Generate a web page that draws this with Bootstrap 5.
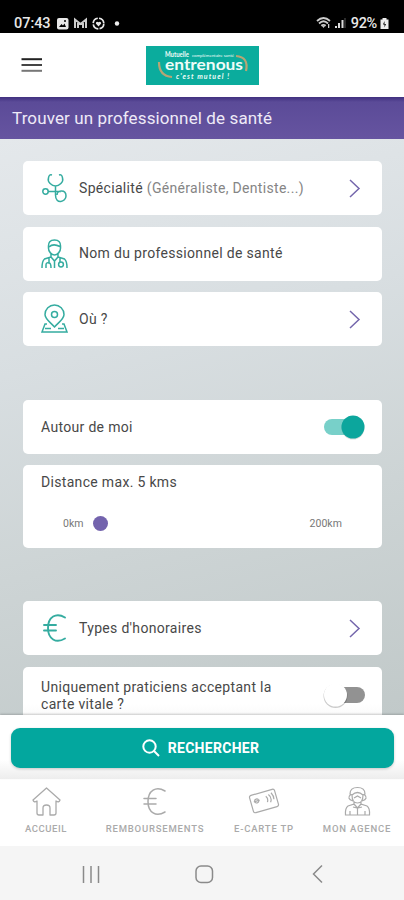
<!DOCTYPE html>
<html lang="fr">
<head>
<meta charset="utf-8">
<meta name="viewport" content="width=device-width, initial-scale=1">
<title>Trouver un professionnel de santé</title>
<link href="https://cdn.jsdelivr.net/npm/bootstrap@5.3.0/dist/css/bootstrap.min.css" rel="stylesheet">
<style>
body{font-family:Roboto,"Liberation Sans",sans-serif;color:#484848;font-size:14px;line-height:17px;background:#fff}
svg{display:block;flex:none;overflow:visible}
.phone{width:404px;height:900px}
.status{height:33px;background:#000;color:#e8e8e8;font-size:14.5px;font-weight:500;padding:15px 15px 0 14px}
.topbar{height:64px;padding:0 21px}
.title-strip{height:42px;background:linear-gradient(#40307f,#5b4b98 5px,#6654a0);color:#eeeaf7;font-size:17px;padding-left:12px;letter-spacing:.12px}
.content{height:576px;padding:22px 22px 0 23px;background:linear-gradient(165deg,#e4e8eb 0%,#d8dee1 35%,#cdd4d5 65%,#c1c9c9 100%)}
.tile{background:#fff;border-radius:5px;height:54px;margin-bottom:11.5px;padding:0 18px;letter-spacing:.32px;flex:none}
.tile-label{padding-left:11px}
.gap-top{margin-top:42.5px;margin-bottom:10.5px}
.hint{color:#858585}
.distance{height:83px;padding-top:9px;margin-bottom:0}
.scale-row{font-size:10.5px;letter-spacing:.05px;color:#777;padding:24px 22px 0 22px}
.dot{width:15px;height:15px;border-radius:50%;background:#7363ad;margin-left:9px}
.toggle{width:40px;height:24px}
.last{height:62px;padding-top:12px;background:linear-gradient(#fff 60%,#f4f4f4)}
.search{height:64px;background:linear-gradient(#fff 70%,#ededed);padding:13px 10px 0 11px;box-shadow:0 -1px 2px #0003;z-index:1}
.search .btn{height:40px;background:#03a79e;color:#fff;border:0;border-radius:9px;font-size:14px;font-weight:700;letter-spacing:.3px;box-shadow:0 1px 3px #0003;padding:0 4px 0 0}
.tabs{height:67px;background:#fff;color:#aaa;font-size:9.5px;font-weight:500;line-height:12px;letter-spacing:.8px}
.tabs>div{padding-top:7px}
.tabs span{margin-top:6px;white-space:nowrap}
.sysnav{height:54px;background:#f5f5f5}
</style>
<script src="https://cdn.jsdelivr.net/npm/bootstrap@5.3.0/dist/js/bootstrap.bundle.min.js"></script>
</head>
<body>
<svg width="0" height="0" class="position-absolute"><defs>
<g id="chev" fill="none" stroke="#7466ac" stroke-width="1.5"><path d="M1 1 10 9.500 1 18"/></g>
<g id="euro" fill="none" stroke-linecap="round"><path d="M22 3.500C13 -2 5 3 5 14S13 30 22 24.500M1 11H13M1 16.500H13"/></g>
</defs></svg>
<div class="phone d-flex flex-column overflow-hidden">
  <div class="status d-flex align-items-start">
    <span style="letter-spacing:-.05px">07:43</span>
    <svg width="66" height="14" viewBox="0 0 66 14" class="ms-1" style="margin-top:3px"><rect x="2" y="0" width="11.500" height="11.500" rx="2" fill="#e8e8e8"/><path d="M4 9 6.500 6 8 7.500 9.500 5.500 11 9z" fill="#000"/><circle cx="10" cy="3" r="1" fill="#000"/><path d="M20 10V1.500L25.500 6 31 1.500V10M23 10V5M28 10V5" fill="none" stroke="#ccc" stroke-width="2"/><circle cx="43.500" cy="5.500" r="5.300" fill="none" stroke="#e8e8e8" stroke-width="1.700" stroke-dasharray="7 1.300"/><path d="M43.500 8.500 40.800 5.500Q41 3 43.500 4.200 46 3 46.200 5.500z" fill="#e8e8e8"/><circle cx="62" cy="5.500" r="2.200" fill="#eee"/></svg>
    <svg width="33" height="14" viewBox="0 0 33 14" class="ms-auto me-1" style="margin-top:2px"><g fill="none" stroke="#ccc" stroke-width="1.800"><path d="M3 4Q9.500-2 16 4M5 6.500Q9.500 2 14 6.500M7.300 8.800Q9.500 7 11.700 8.800"/></g><path d="M9.500 11 8 9H11zM14 7h1.300v4H14z" fill="#ccc"/><path d="M21 9h2v2h-2zM24 6h2v5h-2zM27.500 3h2v8h-2z" fill="#ddd"/><path d="M30.500 1h1v10h-1z" fill="#555"/></svg>
    <span style="letter-spacing:-.3px">92%</span>
    <svg width="9" height="12" viewBox="0 0 9 12" style="margin:3px 0 0 3px"><path d="M2.500 0h4v1.500H8.500V11H.5V1.500h2z" fill="#eee"/><path d="M4.500 3 3 6.500h1.500v3L6 6H4.500z" fill="#000"/></svg>
  </div>
  <header class="topbar d-flex align-items-center">
    <svg width="22" height="16" viewBox="0 0 22 16"><path d="M.5 2.200H21" stroke="#222" stroke-width="2"/><path d="M.5 8H21" stroke="#444" stroke-width="2"/><path d="M.5 13.800H21" stroke="#777" stroke-width="2"/></svg>
    <svg width="113" height="39" viewBox="0 0 113 39" style="margin-left:103px"><rect width="113" height="39" fill="#0bac9d"/><g fill="none" stroke="#b8a574" stroke-width="2.200"><path d="M13 16Q13 30 26 31"/><path d="M90 10Q103 11 100 25"/></g><g fill="#effcf8" font-family="Lato,sans-serif"><text x="19" y="11" font-size="6.500" font-weight="700" textLength="24" lengthAdjust="spacingAndGlyphs">Mutuelle</text><text x="46" y="11" font-size="4" textLength="42" lengthAdjust="spacingAndGlyphs">complémentaire santé</text><text x="19" y="24" font-size="15.500" font-weight="700" textLength="78" lengthAdjust="spacingAndGlyphs">entrenous</text><text x="30" y="33" font-size="7" font-weight="700" font-style="italic" textLength="53">c'est mutuel !</text></g></svg>
  </header>
  <div class="title-strip d-flex align-items-center">Trouver un professionnel de santé</div>
  <main class="content d-flex flex-column overflow-hidden">
    <div class="tile d-flex align-items-center">
      <svg width="27" height="30" viewBox="0 0 27 30" fill="none" stroke="#35aca0" stroke-width="1.500"><path d="M11 2Q8 1 7.500 5C6 9 11 13 14.500 13S23 9 21.500 5Q21 1 18 2M14.500 13V22C14.500 32 25 29 25 23 25 16 16 17 16 22M7 18.500H20"/><circle cx="4.500" cy="18.500" r="2.700"/></svg>
      <span class="tile-label"><span>Spécialité</span> <span class="hint">(Généraliste, Dentiste...)</span></span>
      <svg class="ms-auto" style="margin-right:3px" width="12" height="19"><use href="#chev"/></svg>
    </div>
    <div class="tile d-flex align-items-center">
      <svg width="27" height="30" viewBox="0 0 27 30" fill="none" stroke="#35aca0" stroke-width="1.500"><path d="M7.500 8Q7 1 13.500 1T19.500 8C20 13 16 16 13.500 16S7 13 7.500 8ZM8 8Q12 4 19 7.500M10 15V18L3.500 20Q1 22 1 29M17 15V18L23.500 20Q26 22 26 29M10 18 13.500 22 17 18M13.500 22V29M8 19V24M5 29V26Q5 23 8 24 10 24 10 29M19 19V23"/><circle cx="20" cy="25.500" r="2.400"/></svg>
      <span class="tile-label">Nom du professionnel de santé</span>
    </div>
    <div class="tile d-flex align-items-center">
      <svg width="27" height="30" viewBox="0 0 27 30" fill="none" stroke="#35aca0" stroke-width="1.500"><path d="M13.500 23C9 18 4 15 4 10.500A9.500 9.500 0 0 1 23 10.500C23 15 18 18 13.500 23ZM6 20H4L1 28H26L23 20H21M4 24.500H10M17 24.500H23"/><circle cx="13.500" cy="10.500" r="3"/></svg>
      <span class="tile-label">Où ?</span>
      <svg class="ms-auto" style="margin-right:3px" width="12" height="19"><use href="#chev"/></svg>
    </div>
    <div class="tile gap-top d-flex align-items-center">
      <span>Autour de moi</span>
      <svg class="toggle ms-auto" viewBox="0 0 40 24"><rect x="0" y="4" width="34" height="16" rx="8" fill="#78d0c9"/><circle cx="29" cy="13" r="11.500" fill="#0002"/><circle cx="29" cy="12" r="11.500" fill="#0ca69d"/></svg>
    </div>
    <div class="tile distance">
      <div>Distance max. 5 kms</div>
      <div class="scale-row d-flex align-items-center"><span>0km</span><i class="dot"></i><span class="ms-auto">200km</span></div>
    </div>
    <div class="tile d-flex align-items-center" style="margin-top:53.5px">
      <svg width="27" height="28" viewBox="-2 0 27 28" stroke="#35aca0" stroke-width="1.900"><use href="#euro"/></svg>
      <span class="tile-label">Types d'honoraires</span>
      <svg class="ms-auto" style="margin-right:3px" width="12" height="19"><use href="#chev"/></svg>
    </div>
    <div class="tile last d-flex align-items-start">
      <span>Uniquement praticiens acceptant la<br>carte vitale ?</span>
      <svg class="toggle ms-auto mt-1" viewBox="0 0 40 24"><rect x="7" y="4" width="34" height="16" rx="8" fill="#929292"/><circle cx="11.500" cy="13" r="12" fill="#0003"/><circle cx="11.500" cy="12" r="11.500" fill="#fff"/></svg>
    </div>
  </main>
  <div class="search">
    <button class="btn w-100 d-flex align-items-center justify-content-center">
      <svg width="18" height="18" viewBox="0 0 18 18" fill="none" stroke="#fff" stroke-width="2" class="me-2"><circle cx="7.500" cy="7.500" r="6.200"/><path d="m12 12 5 5"/></svg>RECHERCHER
    </button>
  </div>
  <nav class="tabs d-flex">
    <div class="d-flex flex-column align-items-center" style="width:92px"><svg width="29" height="31" viewBox="0 0 29 31" fill="none" stroke="#aaa" stroke-width="1.300" stroke-linejoin="round"><path d="M14.500 2 1 14Q2 17 5 15V27Q5 29 7 29H11V22Q11 19 14.500 19T18 22V29H22Q24 29 24 27V15Q27 17 28 14Z"/></svg><span style="letter-spacing:.55px">ACCUEIL</span></div>
    <div class="d-flex flex-column align-items-center" style="width:126px"><svg width="24" height="31" viewBox="0 -1.500 24 31" stroke="#aaa" stroke-width="1.500"><use href="#euro"/></svg><span>REMBOURSEMENTS</span></div>
    <div class="d-flex flex-column align-items-center" style="width:92px"><svg width="30" height="31" viewBox="0 0 30 31" fill="none" stroke="#aaa" stroke-width="1.200"><g transform="rotate(-16 15 15)"><rect x="2" y="6" width="26" height="18" rx="2"/><circle cx="8" cy="13" r="2"/><path d="M5 13h6M18 11q2 3 0 6M21 10q3 4 0 8M24 9q2 4 1 7"/></g></svg><span>E-CARTE TP</span></div>
    <div class="d-flex flex-column align-items-center" style="width:94px"><svg width="27" height="31" viewBox="0 0 27 31" fill="none" stroke="#aaa" stroke-width="1.200"><path d="M6 8Q6 1.500 13.500 1.500T21 8L19 9Q13.500 4 8 9ZM7 8Q2 13 9 15M20 8Q25 13 18 15M8 9Q8 17 13.500 17T19 9M10 12 13.500 10 17 12M10 16V18L4 20Q1 22 1.500 29H25.500Q26 22 23 20L17 18V16M10 18 13.500 22 17 18M13.500 22V29M6 25V29M21 25V29M9 21l4 1M18 21l-4 1"/></svg><span>MON AGENCE</span></div>
  </nav>
  <div class="sysnav d-flex align-items-center">
    <svg width="404" height="54" viewBox="0 0 404 54" fill="none" stroke="#8a8a8a" stroke-width="1.500"><path d="M83.500 20V37M91 20V37M98.500 20V37M322 19.500 313.500 28 322 36.500"/><rect x="196" y="20" width="16.500" height="16.500" rx="5"/></svg>
  </div>
</div>
</body>
</html>
